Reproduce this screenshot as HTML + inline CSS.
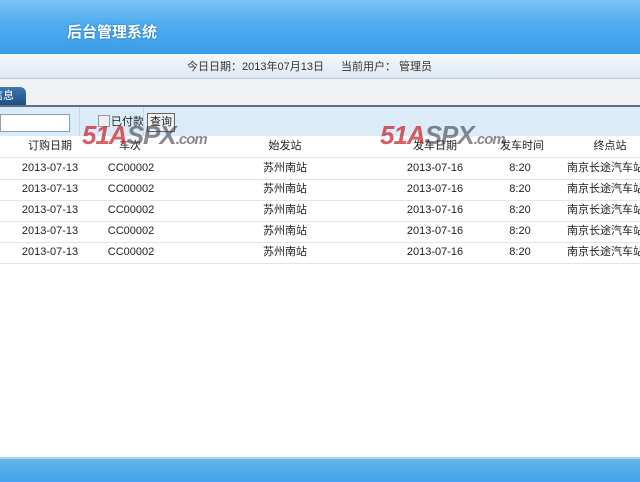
<!DOCTYPE html>
<html><head><meta charset="utf-8"><style>
body{margin:0;width:640px;height:480px;overflow:hidden;background:#fff;font-family:"Liberation Sans","Noto Sans CJK SC",sans-serif;font-size:11px;line-height:13px;color:#222;position:relative}
.hd{position:absolute;left:0;top:0;width:640px;height:54px;background:linear-gradient(#7cc4f4,#52aef0 40%,#3a9ce8)}
.hd .t{position:absolute;left:67px;top:24px;font-size:15px;line-height:18px;font-weight:bold;color:#fff;text-shadow:0 0 2px #1b6fb5}
.bar{position:absolute;left:0;top:54px;width:640px;height:24px;background:linear-gradient(#f4f8fc,#dfe8f2);border-bottom:1px solid #b8cad8}
.bar span{position:absolute;top:7px;color:#333}
.tabs{position:absolute;left:0;top:79px;width:640px;height:26px;background:#f0f2f4;border-bottom:2px solid #607080}
.tab{position:absolute;left:-8px;top:8px;width:34px;height:18px;background:linear-gradient(#3d78b0,#1c4f86);border-radius:0 6px 0 0;color:#fff;line-height:18px;overflow:hidden;white-space:nowrap}
.tb{position:absolute;left:0;top:107px;width:640px;height:29px;background:#dcebf8}
.in{position:absolute;left:0;top:7px;width:68px;height:16px;border:1px solid #8aa0b4;background:#fff}
.sep{position:absolute;top:0;width:1px;height:29px;background:#c8d8e6}
.cb{position:absolute;left:98px;top:8px;width:10px;height:10px;border:1px solid #999;background:#eee}
.btn{position:absolute;left:147px;top:6px;width:26px;height:17px;border:1px solid #666;background:#f0f0f0;line-height:17px;text-align:center;white-space:nowrap;overflow:hidden}
.row{position:absolute;left:0;width:640px;height:21px;border-bottom:1px solid #e4e4e4}
.row span{position:absolute;top:4px;transform:translateX(-50%);white-space:nowrap}
.wm{position:absolute;font-weight:bold;font-style:italic;font-size:26px;line-height:30px;color:rgba(200,40,50,.75);letter-spacing:-1px;white-space:nowrap}
.wm b{color:rgba(60,60,70,.6)}
.wm i{font-size:15px;color:rgba(60,60,70,.6)}
.ft{position:absolute;left:0;top:457px;width:640px;height:23px;background:linear-gradient(#66b4ea,#42a4ec);border-top:2px solid #a8d4e4}
</style></head><body>
<div class="hd"><div class="t">后台管理系统</div></div>
<div class="bar"><span style="left:187px">今日日期：2013年07月13日</span><span style="left:341px">当前用户：&nbsp;管理员</span></div>
<div class="tabs"><div class="tab">信息</div></div>
<div class="tb"><div class="in"></div><div class="sep" style="left:79px"></div><div class="cb"></div><span style="position:absolute;left:111px;top:9px">已付款</span><div class="sep" style="left:143px"></div><div class="btn">查询</div></div>
<div class="row" style="top:136px"><span style="left:50px">订购日期</span><span style="left:130px">车次</span><span style="left:285px">始发站</span><span style="left:435px">发车日期</span><span style="left:522px">发车时间</span><span style="left:610px">终点站</span></div>
<div class="row" style="top:158px"><span style="left:50px">2013-07-13</span><span style="left:131px">CC00002</span><span style="left:285px">苏州南站</span><span style="left:435px">2013-07-16</span><span style="left:520px">8:20</span><span style="left:611px">南京长途汽车站南</span></div>
<div class="row" style="top:179px"><span style="left:50px">2013-07-13</span><span style="left:131px">CC00002</span><span style="left:285px">苏州南站</span><span style="left:435px">2013-07-16</span><span style="left:520px">8:20</span><span style="left:611px">南京长途汽车站南</span></div>
<div class="row" style="top:200px"><span style="left:50px">2013-07-13</span><span style="left:131px">CC00002</span><span style="left:285px">苏州南站</span><span style="left:435px">2013-07-16</span><span style="left:520px">8:20</span><span style="left:611px">南京长途汽车站南</span></div>
<div class="row" style="top:221px"><span style="left:50px">2013-07-13</span><span style="left:131px">CC00002</span><span style="left:285px">苏州南站</span><span style="left:435px">2013-07-16</span><span style="left:520px">8:20</span><span style="left:611px">南京长途汽车站南</span></div>
<div class="row" style="top:242px"><span style="left:50px">2013-07-13</span><span style="left:131px">CC00002</span><span style="left:285px">苏州南站</span><span style="left:435px">2013-07-16</span><span style="left:520px">8:20</span><span style="left:611px">南京长途汽车站南</span></div>
<div class="wm" style="left:82px;top:120px">51A<b>SPX</b><i>.com</i></div>
<div class="wm" style="left:380px;top:120px">51A<b>SPX</b><i>.com</i></div>
<div class="ft"></div>
</body></html>
